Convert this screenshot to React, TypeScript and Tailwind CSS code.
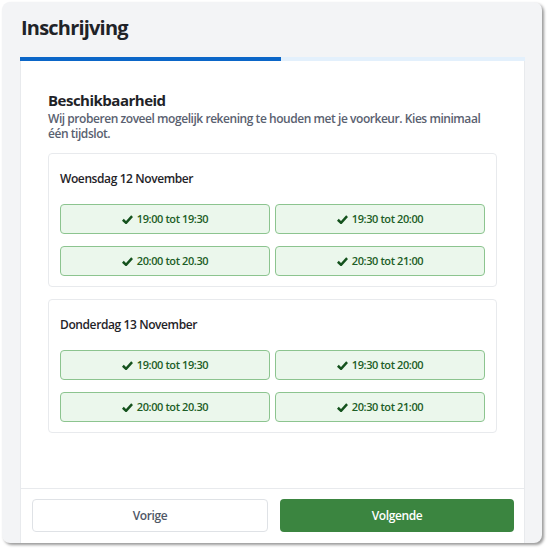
const days = [
    { title: "Woensdag 12 November", slots: ["19:00 tot 19:30", "19:30 tot 20:00", "20:00 tot 20.30", "20:30 tot 21:00"] },
    { title: "Donderdag 13 November", slots: ["19:00 tot 19:30", "19:30 tot 20:00", "20:00 tot 20.30", "20:30 tot 21:00"] },
]

function Check() {
    return (
        <svg viewBox="0 0 10 8" className="w-[11px] h-[9px]">
            <path d="M0.8 4.2 L3.7 7 L9.2 1" fill="none" stroke="#14521d" strokeWidth="2.3" />
        </svg>
    )
}

export default function App() {
    return (
        <div className="w-[550px] h-[550px] bg-white" style={{ fontFamily: '"Open Sans", sans-serif' }}>
            <div className="ml-[2px] pt-[2px]">
                <div className="w-[540px] h-[541px] rounded-lg bg-[#f3f4f6] shadow-[2px_2px_3px_rgba(0,0,0,0.4)] overflow-hidden flex flex-col">
                    <h1 className="h-[55px] pl-[19px] pt-[12px] text-[20px] leading-[28px] font-bold tracking-[-0.8px] text-[#1f2328]">Inschrijving</h1>
                    <div className="ml-[18px] w-[505px] flex-1 flex flex-col bg-white border-x border-[#e8eaed]">
                        {/* progress */}
                        <div className="h-[4px] bg-[#e3f0fc] -mx-px">
                            <div className="h-full w-[261px] bg-[#0b66c8]" />
                        </div>
                        <div className="flex-1 px-[27px] pt-[29px]">
                            <h2 className="text-[15px] leading-[20px] font-bold tracking-[-0.5px] text-[#1f2328]">Beschikbaarheid</h2>
                            <p className="mt-px text-[12px] leading-[15px] font-semibold tracking-[-0.45px] text-[#5a6170]">
                                Wij proberen zoveel mogelijk rekening te houden met je voorkeur. Kies minimaal één tijdslot.
                            </p>
                            <div className="mt-[12px] flex flex-col gap-[12px]">
                                {days.map(day => (
                                    <div key={day.title} className="border border-[#e8eaed] rounded-[4px] px-[11px] pt-[16px] pb-[10px]">
                                        <div className="text-[12px] leading-[18px] font-semibold tracking-[-0.4px] text-[#1f2328]">{day.title}</div>
                                        <div className="mt-[16px] grid grid-cols-2 gap-x-[5px] gap-y-[12px]">
                                            {day.slots.map(slot => (
                                                <button key={slot} className="h-[30px] rounded-[4px] border border-[#8cc48f] bg-[#ebf7ec] flex items-center justify-center gap-[4px] text-[11px] font-semibold tracking-[-0.4px] text-[#1d5e27]">
                                                    <Check />
                                                    {slot}
                                                </button>
                                            ))}
                                        </div>
                                    </div>
                                ))}
                            </div>
                        </div>
                        <div className="h-[55px] border-t border-[#e8eaed] pl-[11px] pr-[10px] pt-[10px] flex gap-[12px]">
                            <button className="flex-1 h-[33px] rounded-[4px] border border-[#dfe2e6] bg-white text-[12px] font-semibold tracking-[-0.4px] text-[#4f5766]">Vorige</button>
                            <button className="flex-1 h-[33px] rounded-[4px] bg-[#3b8540] text-[12px] font-semibold tracking-[-0.4px] text-white">Volgende</button>
                        </div>
                    </div>
                </div>
            </div>
        </div>
    )
}
